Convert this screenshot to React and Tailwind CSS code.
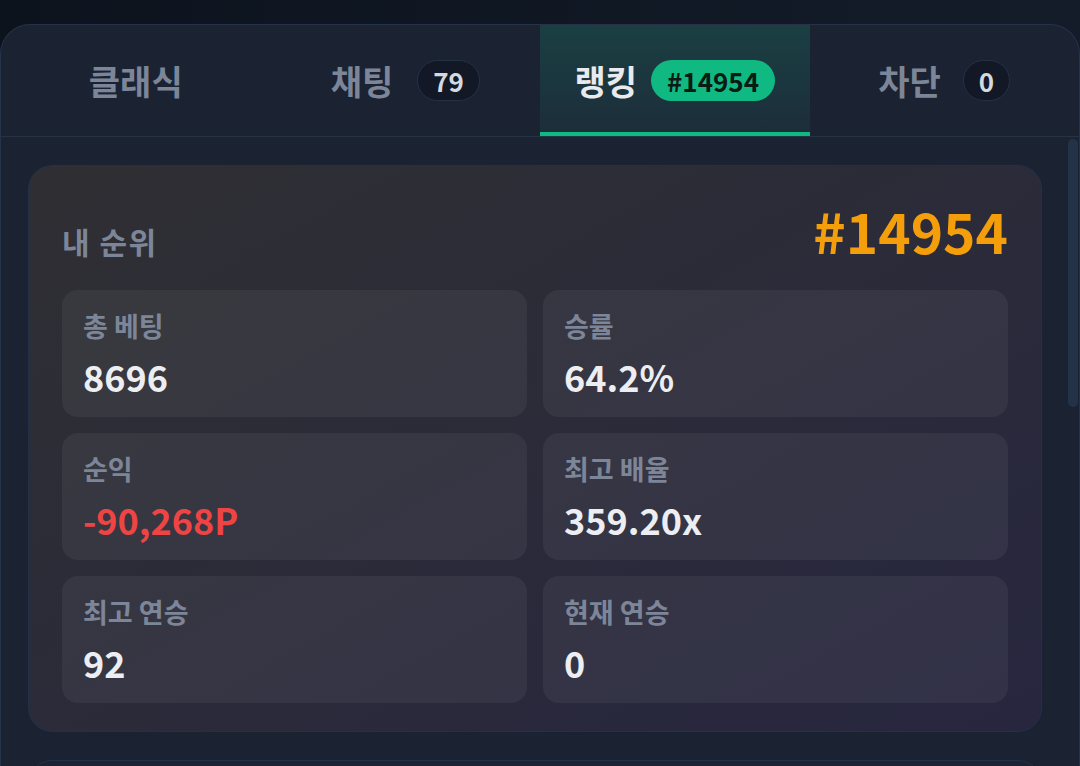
const tabs = [
  { label: "클래식" },
  { label: "채팅", badge: "79", gap: "gap-6" },
  { label: "랭킹", badge: "#14954", active: true, gap: "gap-[14px]" },
  { label: "차단", badge: "0", gap: "gap-[22px]" },
];

const stats = [
  { label: "총 베팅", value: "8696" },
  { label: "승률", value: "64.2%" },
  { label: "순익", value: "-90,268P", negative: true },
  { label: "최고 배율", value: "359.20x" },
  { label: "최고 연승", value: "92" },
  { label: "현재 연승", value: "0" },
];

function Tab({ tab }) {
  return (
    <button
      className={`relative flex items-center justify-center ${tab.gap || ""} ${
        tab.active
          ? "bg-gradient-to-b from-[#1a3f43] to-[#1c2d39] text-[#e8eaee]"
          : "text-[#7d8698]"
      }`}
    >
      <span className="text-[34px] font-bold leading-none">{tab.label}</span>
      {tab.badge && (
        <span
          className={`h-[41px] rounded-full flex items-center text-[26px] font-semibold leading-none ${
            tab.active
              ? "bg-[#10b981] text-[#0a1a14] px-4"
              : "bg-[#121826] border border-[#243246] text-[#d4d8df] px-[15px]"
          }`}
        >
          {tab.badge}
        </span>
      )}
      {tab.active && <span className="absolute left-0 right-0 bottom-0 h-1 bg-[#10b981]" />}
    </button>
  );
}

function StatBox({ stat }) {
  return (
    <div className="rounded-2xl bg-white/[0.05] px-[21px] pt-5 pb-[19px]">
      <div className="text-[27px] font-semibold leading-8 text-[#7d8698]">{stat.label}</div>
      <div
        className={`mt-3 text-[36px] font-bold leading-[44px] ${
          stat.negative ? "text-[#ef4444]" : "text-[#eceef2]"
        }`}
      >
        {stat.value}
      </div>
    </div>
  );
}

export default function App() {
  return (
    <div
      className="min-h-screen bg-gradient-to-r from-[#0c131d] to-[#141c2a] pt-6 overflow-hidden"
      style={{ fontFamily: '"Noto Sans CJK KR", "Noto Sans", sans-serif' }}
    >
      <div className="h-[742px] rounded-t-[30px] border border-[#253247] border-b-0 bg-[#1b2333] overflow-hidden flex flex-col">
        {/* tabs */}
        <div className="grid grid-cols-4 h-[112px] border-b border-[#263347] shrink-0">
          {tabs.map((t) => (
            <Tab key={t.label} tab={t} />
          ))}
        </div>

        {/* content */}
        <div className="relative flex-1 pl-[27px] pr-[37px] pt-7">
          <div className="rounded-[24px] border border-[#22304a] bg-gradient-to-br from-[#2f2f33] to-[#27263f] px-[33px] pt-[37px] pb-[28px]">
            <div className="flex items-baseline justify-between">
              <span className="text-[30px] font-semibold text-[#7d8698] tracking-wider">내 순위</span>
              <span className="text-[55px] font-bold leading-none text-[#f59e0b]">#14954</span>
            </div>
            <div className="mt-[26px] grid grid-cols-2 gap-4">
              {stats.map((s) => (
                <StatBox key={s.label} stat={s} />
              ))}
            </div>
          </div>

          <div className="mt-7 h-[200px] rounded-[24px] border border-[#22304a] bg-[#1c2434]" />

          {/* scrollbar thumb */}
          <div className="absolute right-[1px] top-[2px] w-[10px] h-[268px] rounded-full bg-[#243247]" />
        </div>
      </div>
    </div>
  );
}
